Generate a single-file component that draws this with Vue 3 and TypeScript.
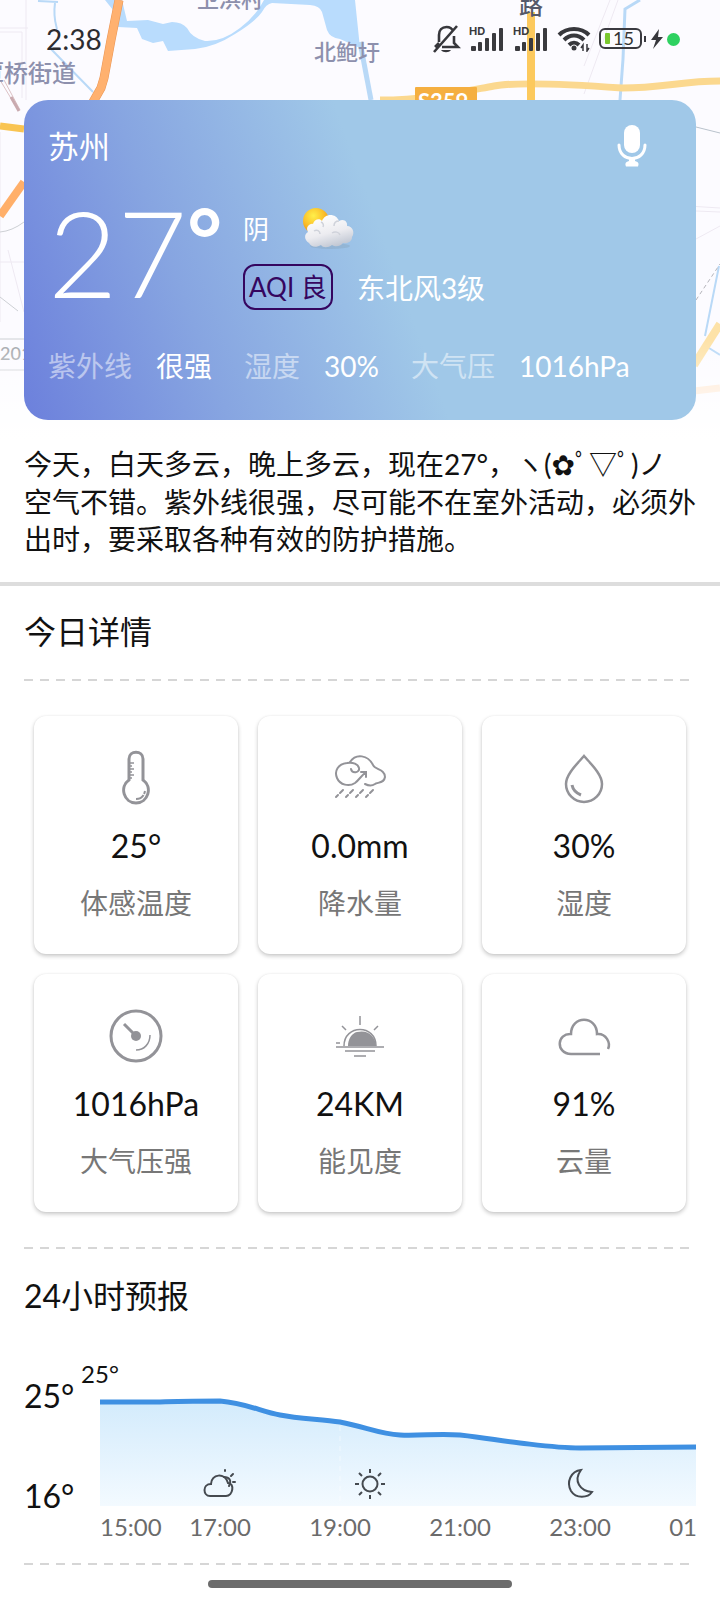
<script setup lang="ts">
interface Metric { label: string; value: string }
interface Detail extends Metric { icon: string }
interface Hour { label: string; x: number; anchor: 'start' | 'middle' }

const metrics: Metric[] = [
  { label: '紫外线', value: '很强' },
  { label: '湿度', value: '30%' },
  { label: '大气压', value: '1016hPa' },
]

const details: Detail[] = [
  { icon: 'thermometer', value: '25°', label: '体感温度' },
  { icon: 'rain', value: '0.0mm', label: '降水量' },
  { icon: 'drop', value: '30%', label: '湿度' },
  { icon: 'gauge', value: '1016hPa', label: '大气压强' },
  { icon: 'sunset', value: '24KM', label: '能见度' },
  { icon: 'cloud', value: '91%', label: '云量' },
]

const hours: Hour[] = [
  { label: '15:00', x: 0, anchor: 'start' },
  { label: '17:00', x: 120, anchor: 'middle' },
  { label: '19:00', x: 240, anchor: 'middle' },
  { label: '21:00', x: 360, anchor: 'middle' },
  { label: '23:00', x: 480, anchor: 'middle' },
  { label: '01:00', x: 600, anchor: 'middle' },
]

const curve =
  'M0 52 H60 C80 51 100 51 120 51 C146 53 162 62 180 65 C200 69 222 69 240 72 C266 77 280 84 300 85 C322 86 338 83 360 85 C388 88 400 91 420 93 C446 96 460 98 480 98 C520 98 560 97 604 97'
</script>

<template>
  <div class="page">
    <svg class="map" viewBox="0 0 720 440" preserveAspectRatio="xMidYMin slice" aria-hidden="true">
      <defs>
        <linearGradient id="mapFade" x1="0" y1="0" x2="0" y2="1">
          <stop offset="0" stop-color="#fff" stop-opacity="0" />
          <stop offset="1" stop-color="#fff" />
        </linearGradient>
      </defs>
      <rect width="720" height="440" fill="#fcfbff" />
      <g fill="none" stroke="#eee9f2" stroke-width="1">
        <path d="M0 28h28M0 32h22v66M26 0v100M0 132v190M8 250l16 62M618 0l-34 94M610 0l-26 66" />
        <path d="M672 205l48 3M672 210l48 2M672 252l48-26M0 262h24" />
      </g>
      <path d="M105 0L113 10L118 27L137 28L142 39L153 43L163 41L168 51L195 49Q215 47 235 34Q255 22 262 12Q266 4 272 3L310 5Q320 6 322 12L327 30Q330 38 340 39L360 48L355 0H264Q256 16 240 28Q222 42 205 41Q192 38 187 28Q182 22 172 22L163 24L148 20L127 21L122 0Z" fill="#b9dcfd" />
      <g fill="none" stroke="#b9d9f7">
        <path d="M38 1l20 1M55 3c-2 14 1 22 2 26M50 48l43 44" stroke-width="2" />
        <path d="M360 42l11 58" stroke-width="5" />
        <path d="M640 0l-15 9-2 50-3 41" stroke-width="3" />
        <path d="M719 266l-14 70M709 348l11 7" stroke-width="2" />
      </g>
      <path d="M119 0l-8 40-7 38-3 10-8 14" fill="none" stroke="#e99555" stroke-width="9" />
      <path d="M119 0l-8 40-7 38-3 10-8 14" fill="none" stroke="#ffb16f" stroke-width="8" />
      <path d="M0 126l24 3" fill="none" stroke="#f9c452" stroke-width="7" />
      <path d="M0 216l24-34" fill="none" stroke="#ffaf6a" stroke-width="8" />
      <path d="M0 80l18 30M4 80l16 30" fill="none" stroke="#dcc2c5" />
      <path d="M11 97l8 14" fill="none" stroke="#c9aaaf" stroke-width="3" />
      <path d="M380 100c46 0 86-9 114-14s100 0 128 2c40 0 60-7 98-7" fill="none" stroke="#fbd88f" stroke-width="7" />
      <path d="M531 12v88" fill="none" stroke="#fcc95d" stroke-width="8" />
      <path d="M694 365l26-41" fill="none" stroke="#fde2a8" stroke-width="8" />
      <path d="M694 391l26-3" fill="none" stroke="#ffe6cf" stroke-width="7" />
      <path d="M696 300l24-36" fill="none" stroke="#b4b4bb" stroke-dasharray="4 3" />
      <path d="M696 127l24 6" fill="none" stroke="#b9c2cc" />
      <path d="M0 232q12-1 24-10M0 297l18 14M0 339h24M0 370h24" fill="none" stroke="#cdd0d4" />
      <rect x="415" y="87" width="62" height="20" rx="1" fill="#f5af40" />
      <g class="map-text">
        <text x="418" y="110" class="road">S359</text>
        <text x="197" y="7" font-size="22">卫浜村</text>
        <text x="314" y="60" font-size="22">北鲍圩</text>
        <text x="-20" y="82" font-size="24">覃桥街道</text>
        <text x="519" y="14" font-size="24" fill="#55596a">路</text>
        <text x="0" y="360" font-size="18" fill="#a5a8ad">2012</text>
      </g>
      <rect y="340" width="720" height="100" fill="url(#mapFade)" />
    </svg>

    <header class="status">
      <time class="clock">2:38</time>
      <div class="status-icons">
        <svg width="28" height="30" viewBox="0 0 28 30" fill="none" stroke="#37373c" stroke-width="2.600" aria-label="静音">
          <path d="M6 18V11C6 6 9 3 13.500 3c3 0 5.500 1.500 6.500 4M21 12v7l4 4H9M6 19l-4 4M1 28L24 2" />
          <path d="M8 26c2 3 8 3 10 0z" fill="#37373c" stroke="none" />
        </svg>
        <svg v-for="sim in 2" :key="sim" width="36" height="26" viewBox="0 0 36 26" fill="#3a3a3e">
          <text x="0" y="9" class="hd">HD</text>
          <rect x="2" y="20" width="5" height="5" rx="1" /><rect x="9" y="16" width="4" height="9" rx="1" />
          <rect x="16" y="12" width="4" height="13" rx="1" /><rect x="23" y="7" width="4" height="18" rx="1" />
          <rect x="30" y="2" width="4" height="23" rx="1" />
        </svg>
        <svg class="wifi" width="34" height="26" viewBox="0 0 34 26" fill="none" stroke="#37373c" stroke-width="4">
          <path d="M2 9C10 1 24 1 32 9M7 14c6-6 14-6 20 0M12 19c3-3 7-3 10 0" />
          <circle cx="17" cy="22" r="2.500" fill="#37373c" stroke="none" />
          <path d="M26 25v-6l-2 3M30 18v7l2-3" stroke-width="1.500" />
        </svg>
        <svg class="battery" width="48" height="22" viewBox="0 0 48 22" fill="none">
          <rect x="1" y="1" width="41" height="19" rx="5" stroke="#3a3a40" stroke-width="2" />
          <path d="M46 8v6" stroke="#3a3a40" stroke-width="2" />
          <rect x="6" y="5" width="5" height="11" rx="1" fill="#7ac72e" />
          <text x="14" y="17" class="charge">15</text>
        </svg>
        <svg width="12" height="20" viewBox="0 0 12 20"><path d="M8 0L0 11h5l-3 9 10-12H7z" fill="#37373c" /></svg>
        <i class="dot"></i>
      </div>
    </header>

    <section class="hero">
      <div class="hero-top">
        <h1 class="city">苏州</h1>
        <button class="mic" type="button" aria-label="语音播报">
          <svg width="30" height="44" viewBox="0 0 30 44" fill="none">
            <rect x="7" y="1" width="16" height="28" rx="8" fill="#fff" />
            <path d="M2 21c0 18 26 18 26 0" stroke="#fff" stroke-width="3" stroke-linecap="round" />
            <path d="M12 34h6v3c4 1 4 3 3 5.500H9c-1-2.500-1-4.500 3-5.500z" fill="#fff" />
          </svg>
        </button>
      </div>
      <div class="now">
        <div class="temp">27<span class="degree">°</span></div>
        <div class="now-side">
          <div class="condition">
            <span>阴</span>
            <svg width="56" height="46" viewBox="0 0 56 46" aria-hidden="true">
              <defs>
                <radialGradient id="sunFill" cx=".4" cy=".3" r=".8">
                  <stop offset="0" stop-color="#fff04a" /><stop offset=".5" stop-color="#fbc02a" /><stop offset="1" stop-color="#e8830c" />
                </radialGradient>
                <linearGradient id="cloudFill" x1=".3" y1="0" x2=".7" y2="1">
                  <stop offset="0" stop-color="#fff" /><stop offset=".55" stop-color="#ececf0" /><stop offset="1" stop-color="#bcc3d0" />
                </linearGradient>
              </defs>
              <circle cx="15" cy="15" r="13" fill="url(#sunFill)" />
              <ellipse cx="29" cy="40" rx="20" ry="3" fill="#8ba9c4" opacity=".5" />
              <path d="M8 37c-5-3-5-9-1-11-3-5 2-9 5-8 1-5 7-6 9-3 3-8 14-8 17 0 5-3 9 1 8 5 6 0 8 7 5 11 0 5-5 7-9 6-3 4-8 4-11 2-4 3-9 3-11 0-5 3-10 2-12-2z" fill="url(#cloudFill)" />
              <path d="M20 16c2 1 3 3 2 5M38 15c-3 0-5 2-5 5M13 25c3-2 6 0 6 3M31 27c3-2 7-1 8 2" fill="none" stroke="#cfd2da" stroke-width="1.500" />
            </svg>
          </div>
          <div class="air">
            <span class="aqi">AQI 良</span>
            <span>东北风3级</span>
          </div>
        </div>
      </div>
      <dl class="metrics">
        <div v-for="m in metrics" :key="m.label" class="metric">
          <dt>{{ m.label }}</dt>
          <dd>{{ m.value }}</dd>
        </div>
      </dl>
    </section>

    <p class="summary">今天，白天多云，晚上多云，现在27°，ヽ(<span class="flower">✿</span>ﾟ▽ﾟ)ノ<br>空气不错。紫外线很强，尽可能不在室外活动，必须外出时，要采取各种有效的防护措施。</p>

    <main class="content">
      <h2>今日详情</h2>
      <div class="dashes"></div>
      <div class="grid">
        <article v-for="d in details" :key="d.icon" class="card">
          <svg class="icon" width="56" height="56" viewBox="0 0 56 56" fill="none" stroke="#939398" stroke-width="3" aria-hidden="true">
            <g v-if="d.icon === 'thermometer'">
              <path d="M21 30V9c0-9 14-9 14 0v21c10 7 5 23-7 23S11 37 21 30z" />
              <path d="M21 13h5M21 16h3M21 19h5M21 22h3M21 25h5M21 28h3" stroke-width="1.500" />
              <path d="M28 49c5 0 8-3 9-8" stroke-width="2" stroke-dasharray="9 1" />
            </g>
            <g v-else-if="d.icon === 'rain'" stroke-width="2" stroke-linecap="round">
              <path d="M18 12c6-9 18-7 23 3 2 5 12 4 12 12-1 7-8 5-10 7-3 2-6 2-10 0" />
              <path d="M20 17c1 5 9 4 8-1-1-4-6-6-12-5C7 12 3 19 6 26s12 9 18 5c4-3 6-7 10-10M30 20h5v5" transform="translate(-1 2)" />
              <path d="M11 43l-3 3M6 48l-2 2M21 43l-3 3M16 48l-2 2M31 43l-3 3M26 48l-2 2M41 43l-3 3M36 48l-2 2" transform="translate(0 -3)" />
            </g>
            <g v-else-if="d.icon === 'drop'">
              <path d="M28 6C22 13 10 24 10 34a18 18 0 0 0 36 0C46 24 34 13 28 6z" stroke-width="2.500" />
              <path d="M16 35c1 5 4 8 9 10" />
            </g>
            <g v-else-if="d.icon === 'gauge'">
              <circle cx="28" cy="28" r="25" />
              <circle cx="28" cy="28" r="5" fill="#939398" stroke="none" />
              <path d="M28 28L16 16" />
              <path d="M42 27c0 9-6 15-14 15" stroke-width="1.500" />
            </g>
            <g v-else-if="d.icon === 'sunset'" stroke-width="1.500">
              <path d="M28 8v9M10 18l4 4M46 18l-4 4M4 35h4" />
              <path d="M12 38c0-22 32-22 32 0" />
              <path d="M16 38c0-7 4-13 9-14 12-3 19 6 19 14z" fill="#939398" stroke="none" />
              <path d="M4 39h48M13 43h30M22 48h12" />
            </g>
            <path v-else d="M44 46H15C-1 45 1 25 15 26C15 7 41 7 41 26c9-1 14 9 11 15" stroke-width="2.500" />
          </svg>
          <strong class="value">{{ d.value }}</strong>
          <span class="label">{{ d.label }}</span>
        </article>
      </div>
      <div class="dashes"></div>

      <h2>24小时预报</h2>
      <div class="forecast">
        <div class="axis"><span>25°</span><span>16°</span></div>
        <svg class="chart" viewBox="0 0 596 188" role="img" aria-label="24小时预报">
          <defs>
            <linearGradient id="areaFill" x1="0" y1="0" x2="0" y2="1">
              <stop offset="0" stop-color="#d3ebfc" />
              <stop offset="1" stop-color="#f3faff" />
            </linearGradient>
          </defs>
          <path :d="`${curve} V156 H0 Z`" fill="url(#areaFill)" />
          <path :d="curve" fill="none" stroke="#3f90e2" stroke-width="5" />
          <path d="M240 76v80" stroke="#fff" stroke-dasharray="5 5" opacity=".5" />
          <text x="0" y="33" text-anchor="middle" class="point">25°</text>
          <g fill="none" stroke="#454a50" stroke-width="2" stroke-linecap="round">
            <path d="M110 146c-7 0-8-12 1-12 0-10 14-12 17-1 7 0 5 13-2 13z" />
            <path d="M124 127c5 0 8 3 5 9M125 121v-1M131 126l2-2M133 132h2" />
            <circle cx="270" cy="134" r="7.500" />
            <path d="M270 123v-4M270 149v-4M259 134h-4M285 134h-4M262 126l-3-3M281 145l-3-3M262 142l-3 3M281 123l-3 3" stroke-linecap="butt" />
            <path d="M481 120c-8 11-1 21 11 22-4 6-16 7-21-1-5-9 0-20 10-21z" />
          </g>
          <text v-for="h in hours" :key="h.label" :x="h.x" y="186" :text-anchor="h.anchor" class="hour">{{ h.label }}</text>
        </svg>
      </div>
      <div class="dashes"></div>
    </main>
    <div class="home-bar"></div>
  </div>
</template>

<style>
body { background: #fff; }
</style>

<style scoped>
.page {
  position: relative;
  overflow: hidden;
  background: #fff;
  color: #111;
  font-family: Lato, "Noto Sans CJK SC", sans-serif;
  font-size: 28px;
}
.map { position: absolute; top: 0; left: 0; width: 100%; height: 440px; }
.map-text { fill: #8d90ad; font-weight: 500; }
.road { fill: #fff; font-size: 22px; font-weight: 700; }
.status {
  position: relative;
  display: flex;
  align-items: center;
  justify-content: space-between;
  height: 78px;
  padding: 0 40px 0 46px;
}
.clock { color: #2c2c30; }
.status-icons { display: flex; align-items: center; gap: 8px; }
.hd { font-size: 11px; font-weight: 700; font-family: Inter, sans-serif; }
.battery { margin-right: -4px; }
.charge { font-size: 18px; fill: #333; }
.dot { width: 13px; height: 13px; margin-left: -4px; border-radius: 50%; background: #2ed160; }
.hero {
  position: relative;
  margin: 22px 24px 0;
  padding: 24px 24px 34px;
  border-radius: 24px;
  color: #fff;
  background: linear-gradient(70deg, #6c80dc 0%, #87a5e1 26%, #a0c8e8 54%);
}
.hero-top { display: flex; justify-content: space-between; align-items: center; height: 44px; }
.city { margin: 0; font-size: 31px; font-weight: 400; line-height: 44px; }
.mic {
  display: flex;
  margin: 0 16px 0 0;
  padding: 0 9px;
  border: 0;
  background: none;
}
.now { display: flex; align-items: center; gap: 24px; height: 128px; margin-top: 26px; }
.temp {
  display: flex;
  align-self: flex-start;
  align-items: flex-start;
  width: 171px;
  font-size: 120px;
  font-weight: 300;
  line-height: 116px;
}
.degree { font-size: 84px; font-weight: 700; line-height: 88px; }
.now-side { display: flex; flex-direction: column; gap: 12px; }
.condition { display: flex; align-items: center; gap: 32px; height: 46px; font-size: 26px; line-height: 40px; }
.air { display: flex; align-items: center; gap: 24px; height: 46px; }
.aqi {
  box-sizing: border-box;
  height: 46px;
  padding: 0 4px;
  border: 2px solid #35065f;
  border-radius: 12px;
  color: #35065f;
  font-size: 26px;
  line-height: 42px;
}
.metrics { display: flex; gap: 32px; margin: 24px 0 0; line-height: 40px; }
.metric { display: flex; gap: 24px; }
.metric dt { opacity: .5; }
.metric dd { margin: 0; }
.summary { position: relative; margin: 0; padding: 26px 24px 24px; line-height: 37px; border-bottom: 4px solid #ddd; }
.flower { font-family: "DejaVu Sans", sans-serif; }
.content { padding: 24px 24px 0; }
h2 { margin: 0; font-size: 32px; font-weight: 400; line-height: 44px; }
.dashes {
  height: 2px;
  margin: 25px 4px 0 0;
  background: repeating-linear-gradient(90deg, #d6d6d6 0 9px, transparent 9px 16px);
}
.grid { display: grid; grid-template-columns: repeat(3, 1fr); gap: 20px; padding: 35px 10px 10px; }
.card {
  display: flex;
  flex-direction: column;
  align-items: center;
  height: 238px;
  padding-top: 34px;
  box-sizing: border-box;
  border-radius: 12px;
  background: #fff;
  box-shadow: 0 2px 4px rgba(0, 0, 0, .22), 0 0 2px rgba(0, 0, 0, .06);
}
.value { margin-top: 18px; font-size: 32px; font-weight: 400; line-height: 44px; }
.label { margin-top: 15px; color: #777; line-height: 40px; }
.dashes + h2 { margin-top: 25px; }
.forecast { display: flex; margin-top: 32px; }
.axis { display: flex; flex-direction: column; flex: 0 0 76px; gap: 56px; padding-top: 24px; font-size: 32px; line-height: 44px; }
.chart { display: block; flex: 1; min-width: 0; overflow: visible; clip-path: inset(-10px 0 -10px -30px); }
.point { font-size: 24px; fill: #111; }
.hour { font-size: 24px; fill: #6b6b6b; }
.home-bar { width: 304px; height: 8px; margin: 15px auto 12px; border-radius: 4px; background: #6c6c6c; }
</style>
